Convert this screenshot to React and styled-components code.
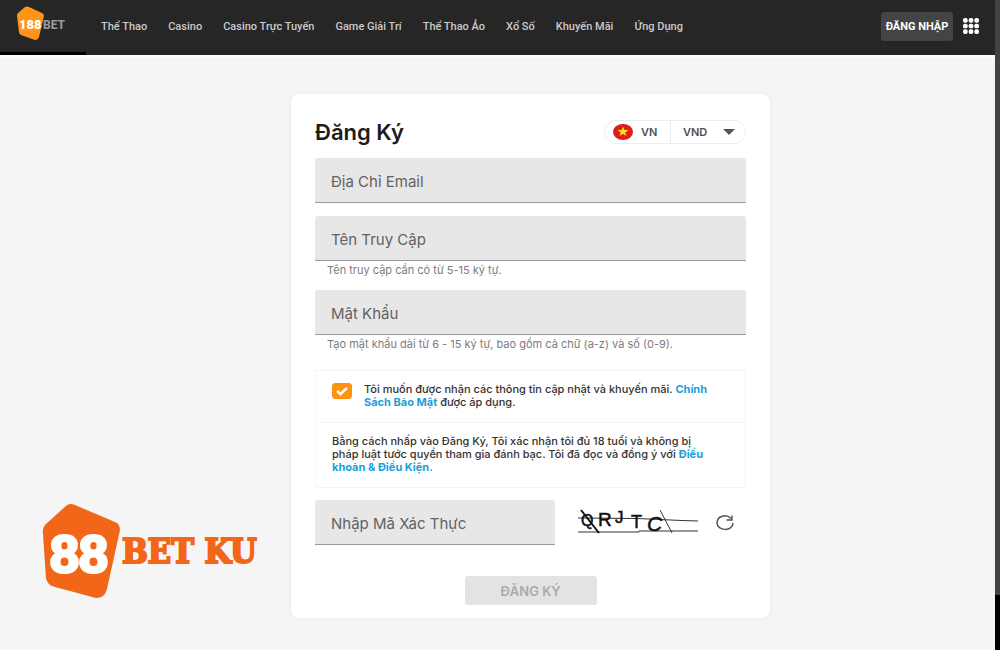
import React, { useState } from "react";
import styled, { createGlobalStyle } from "styled-components";

const GlobalStyle = createGlobalStyle`
    * {
        box-sizing: border-box;
    }
    body {
        margin: 0;
        background-color: #f5f5f5;
        font-family: Inter, "Noto Sans", sans-serif;
        color: #222;
    }
    button,
    input,
    select {
        font-family: inherit;
    }
`;

const Page = styled.div`
    display: flex;
    height: 100vh;
    overflow: hidden;
`;

const Content = styled.div`
    display: flex;
    flex-direction: column;
    flex: 1;
    min-width: 0;
`;

const ScrollTrack = styled.div`
    width: 5px;
    background-color: #000;
`;

const ScrollThumb = styled.div`
    height: 595px;
    background-color: #424242;
`;

const Header = styled.header`
    display: flex;
    align-items: stretch;
    flex-shrink: 0;
    height: 58px;
    padding-right: 16px;
    background-color: #262626;
    border-bottom: 3px solid #fbfbfb;
`;

const HomeLink = styled.a`
    width: 86px;
    padding: 6px 0 0 16px;
    border-bottom: 3px solid #000;
    svg {
        display: block;
    }
`;

const Nav = styled.nav`
    display: flex;
    align-items: center;
    flex: 1;
    gap: 21px;
    padding: 0 0 2px 15px;
    font-family: Roboto, sans-serif;
    font-size: 11px;
    font-weight: 500;
    white-space: nowrap;
    a {
        color: #cacaca;
        text-decoration: none;
    }
`;

const Actions = styled.div`
    display: flex;
    align-items: center;
    gap: 10px;
    padding-bottom: 3px;
`;

const LoginButton = styled.button`
    width: 72px;
    height: 29px;
    padding: 0;
    border: 0;
    border-radius: 3px;
    background-color: #444;
    color: #fff;
    font-family: Roboto, sans-serif;
    font-size: 11px;
    font-weight: 700;
`;

const MenuButton = styled.button`
    padding: 0;
    border: 0;
    background: none;
    svg {
        display: block;
    }
`;

const Main = styled.main`
    display: grid;
    grid-template-columns: 291fr 479fr 225fr;
    flex: 1;
    padding-top: 36px;
`;

const Brand = styled.div`
    padding: 409px 0 0 42px;
    svg {
        display: block;
    }
`;

const Card = styled.form`
    align-self: start;
    padding: 24px 24px 13px;
    border-radius: 8px;
    background-color: #fff;
    box-shadow: 0 0 4px rgba(0, 0, 0, 0.06);
`;

const CardHead = styled.div`
    display: flex;
    align-items: center;
    justify-content: space-between;
    height: 28px;
    margin-bottom: 12px;
`;

const Title = styled.h1`
    margin: 0;
    font-size: 22px;
    font-weight: 600;
    color: #1c1c1c;
`;

const Locale = styled.div`
    display: flex;
    align-items: center;
    width: 142px;
    height: 24px;
    border: 1px solid #ececec;
    border-radius: 12px;
    color: #505050;
    font-size: 11px;
    font-weight: 600;
`;

const Country = styled.div`
    display: flex;
    align-items: center;
    gap: 8px;
    width: 66px;
    height: 100%;
    padding-left: 8px;
    border-right: 1px solid #ececec;
`;

const Currency = styled.div`
    display: flex;
    align-items: center;
    justify-content: space-between;
    flex: 1;
    padding: 0 10px 0 12px;
    select {
        width: 34px;
        padding: 0;
        border: 0;
        appearance: none;
        background: none;
        color: inherit;
        font-size: 11px;
        font-weight: 600;
    }
`;

const Field = styled.div`
    margin-bottom: 13px;
`;

const TextInput = styled.input`
    display: block;
    width: 100%;
    height: 45px;
    padding: 3px 16px 0;
    border: 0;
    border-bottom: 1px solid #999;
    border-radius: 3px 3px 0 0;
    background-color: #e7e7e7;
    color: #333;
    font-size: 15px;
    &::placeholder {
        color: #626262;
        opacity: 1;
    }
`;

const Hint = styled.p`
    margin: 0;
    padding: 2px 12px 0;
    color: #7c7c7c;
    font-size: 11px;
    line-height: 14px;
`;

const Terms = styled.div`
    margin: 19px 0 12px;
    border: 1px solid #f5f5f5;
    color: #333;
    font-size: 11px;
    font-weight: 500;
    line-height: 13px;
    a {
        color: #1a9fd9;
        font-weight: 700;
        text-decoration: none;
    }
`;

const Consent = styled.label`
    display: flex;
    gap: 12px;
    min-height: 52px;
    padding: 12px 16px;
    border-bottom: 1px solid #f5f5f5;
`;

const CheckInput = styled.input`
    flex-shrink: 0;
    width: 20px;
    height: 16px;
    margin: 0;
    border-radius: 3px;
    appearance: none;
    background-color: #fff;
    border: 1px solid #ff9210;
    &:checked {
        background: #ff9210
            url("data:image/svg+xml,%3Csvg xmlns='http://www.w3.org/2000/svg' viewBox='0 0 20 16'%3E%3Cpath d='M5 8l3.500 3L15 5' fill='none' stroke='white' stroke-width='2.500'/%3E%3C/svg%3E")
            center / 20px 16px no-repeat;
    }
`;

const Statement = styled.p`
    margin: 0;
    padding: 12px 28px 13px 16px;
`;

const CaptchaRow = styled.div`
    display: flex;
    align-items: center;
    margin-bottom: 31px;
`;

const CaptchaField = styled.div`
    width: 240px;
`;

const CaptchaImage = styled.svg`
    margin-left: 22px;
`;

const RefreshButton = styled.button`
    margin-left: 16px;
    padding: 0;
    border: 0;
    background: none;
    svg {
        display: block;
    }
`;

const SubmitButton = styled.button`
    display: block;
    width: 132px;
    height: 29px;
    margin: 0 auto;
    padding: 0;
    border: 0;
    border-radius: 3px;
    background-color: #e3e3e3;
    color: #aaa;
    font-size: 13px;
    font-weight: 600;
`;

const links = [
    "Thể Thao",
    "Casino",
    "Casino Trực Tuyến",
    "Game Giải Trí",
    "Thể Thao Ảo",
    "Xổ Số",
    "Khuyến Mãi",
    "Ứng Dụng",
];

const HeaderLogo = () => (
    <svg width="52" height="36" viewBox="0 0 52 36">
        <path
            d="M9 1Q11 0 13 1L26 7Q28 8 28 10L23 31Q22 34 19 34L5 29Q3 28 3 26L1 10Q1 8 2 7Z"
            fill="#ff9418"
        />
        <text x="3" y="23" fill="#fff" fontFamily="Roboto" fontWeight="900" fontSize="13">
            188
        </text>
        <text x="27" y="23" fill="#999" fontFamily="Roboto" fontWeight="800" fontSize="12">
            BET
        </text>
    </svg>
);

const BrandLogo = () => (
    <svg width="218" height="96" viewBox="0 0 218 96" fill="#f26619">
        <path d="M25 2Q29 0 33 2L73 19Q78 21 78 27L65 86Q63 95 54 95L13 84Q5 82 4 75L1 31Q0 25 4 21Z" />
        <text
            x="37"
            y="69"
            textAnchor="middle"
            fill="#fff"
            stroke="#fff"
            strokeWidth="3"
            strokeLinejoin="round"
            fontFamily="Liberation Sans"
            fontWeight="700"
            fontSize="52"
        >
            88
        </text>
        <text
            x="80"
            y="60"
            stroke="#f26619"
            strokeWidth="2"
            fontFamily="DejaVu Serif Condensed, DejaVu Serif"
            fontWeight="700"
            fontSize="34"
        >
            BET KU
        </text>
    </svg>
);

const GridIcon = () => (
    <svg width="16" height="16" viewBox="0 0 17 17" fill="#fff">
        {[0, 6, 12].map((y) =>
            [0, 6, 12].map((x) => (
                <rect key={`${x}-${y}`} x={x} y={y} width="5" height="5" rx="2" />
            ))
        )}
    </svg>
);

const FlagIcon = () => (
    <svg width="20" height="16" viewBox="0 0 20 16">
        <ellipse cx="10" cy="8" rx="10" ry="8" fill="#da1f1c" />
        <path d="M10 2.500l1.400 3.600h4.100l-3.300 2.300 1.200 3.700-3.400-2.300-3.400 2.300 1.200-3.700-3.300-2.300h4.100z" fill="#ffe21a" />
    </svg>
);

const RefreshIcon = () => (
    <svg width="20" height="16" viewBox="0 0 20 16" fill="none" stroke="#555" strokeWidth="1.500">
        <path d="M16 3.500C11 -1.500 2 1 2 8C2 16 18 17 18 8" />
        <path d="M11.500 5H17V0.500" />
    </svg>
);

const Captcha = () => (
    <CaptchaImage
        width="122"
        height="30"
        viewBox="0 0 122 30"
        role="img"
        aria-label="QRJTC"
        fill="#111"
        fontFamily="Liberation Sans"
    >
        <g stroke="#333" strokeWidth="1">
            <path d="M1 10L60 10.500L105 12.500L121 13M1 24H62V23H121" fill="none" />
            <path d="M83 2L95 25" />
            <path d="M4 2L22 25" stroke="#111" strokeWidth="2" />
        </g>
        <g stroke="#111" strokeWidth="0.500">
            <text x="4" y="18" fontSize="16">Q</text>
            <text x="21" y="18" fontSize="19">R</text>
            <text x="38" y="15" fontSize="17">J</text>
            <text x="54" y="20" fontSize="18">T</text>
            <text x="70" y="23" fontSize="21" fontStyle="italic">C</text>
        </g>
    </CaptchaImage>
);

const App = () => {
    const [agree, setAgree] = useState(true);

    return (
        <Page>
            <GlobalStyle />
            <Content>
                <Header>
                    <HomeLink href="#" aria-label="188BET">
                        <HeaderLogo />
                    </HomeLink>
                    <Nav>
                        {links.map((link) => (
                            <a href="#" key={link}>
                                {link}
                            </a>
                        ))}
                    </Nav>
                    <Actions>
                        <LoginButton type="button">ĐĂNG NHẬP</LoginButton>
                        <MenuButton type="button" aria-label="Menu">
                            <GridIcon />
                        </MenuButton>
                    </Actions>
                </Header>
                <Main>
                    <Brand>
                        <BrandLogo />
                    </Brand>
                    <Card onSubmit={(e) => e.preventDefault()}>
                        <CardHead>
                            <Title>Đăng Ký</Title>
                            <Locale>
                                <Country>
                                    <FlagIcon />
                                    VN
                                </Country>
                                <Currency>
                                    <select aria-label="VND">
                                        <option>VND</option>
                                    </select>
                                    <svg width="12" height="6" viewBox="0 0 12 6" fill="#555">
                                        <path d="M0 0H12L6 6Z" />
                                    </svg>
                                </Currency>
                            </Locale>
                        </CardHead>
                        <Field>
                            <TextInput type="email" placeholder="Địa Chỉ Email" aria-label="Địa Chỉ Email" />
                        </Field>
                        <Field>
                            <TextInput type="text" placeholder="Tên Truy Cập" aria-label="Tên Truy Cập" />
                            <Hint>Tên truy cập cần có từ 5-15 ký tự.</Hint>
                        </Field>
                        <Field>
                            <TextInput type="password" placeholder="Mật Khẩu" aria-label="Mật Khẩu" />
                            <Hint>Tạo mật khẩu dài từ 6 - 15 ký tự, bao gồm cả chữ (a-z) và số (0-9).</Hint>
                        </Field>
                        <Terms>
                            <Consent>
                                <CheckInput
                                    type="checkbox"
                                    checked={agree}
                                    onChange={(e) => setAgree(e.target.checked)}
                                />
                                <span>
                                    Tôi muốn được nhận các thông tin cập nhật và khuyến mãi.{" "}
                                    <a href="#">Chính Sách Bảo Mật</a> được áp dụng.
                                </span>
                            </Consent>
                            <Statement>
                                Bằng cách nhấp vào Đăng Ký, Tôi xác nhận tôi đủ 18 tuổi và không bị pháp luật
                                tước quyền tham gia đánh bạc. Tôi đã đọc và đồng ý với{" "}
                                <a href="#">Điều khoản &amp; Điều Kiện.</a>
                            </Statement>
                        </Terms>
                        <CaptchaRow>
                            <CaptchaField>
                                <TextInput type="text" placeholder="Nhập Mã Xác Thực" aria-label="Nhập Mã Xác Thực" />
                            </CaptchaField>
                            <Captcha />
                            <RefreshButton type="button" aria-label="Refresh">
                                <RefreshIcon />
                            </RefreshButton>
                        </CaptchaRow>
                        <SubmitButton type="submit" disabled>
                            ĐĂNG KÝ
                        </SubmitButton>
                    </Card>
                </Main>
            </Content>
            <ScrollTrack>
                <ScrollThumb />
            </ScrollTrack>
        </Page>
    );
};

export default App;
